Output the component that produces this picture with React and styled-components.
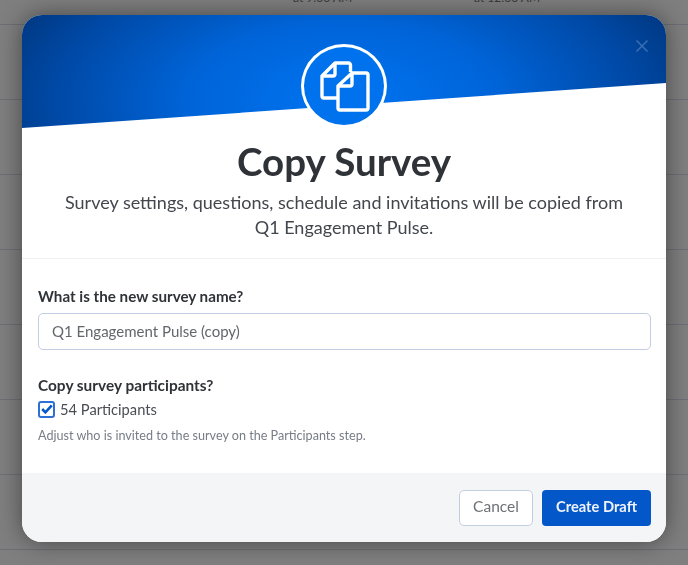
import React from 'react'
import styled, { createGlobalStyle } from 'styled-components'

const GlobalStyle = createGlobalStyle`
  html, body {
    margin: 0;
    height: 100%;
    overflow: hidden;
    background: #7f7f7f;
    font-family: 'Lato', 'Open Sans', sans-serif;
  }
  * {
    box-sizing: border-box;
  }
`

const rows = [
  { first: 'at 9:00 AM', second: 'at 12:00 AM' },
  {}, {}, {}, {}, {}, {}, {},
]

const App = () => {
  return (
    <>
      <GlobalStyle />
      <Table>
        {rows.map((row, i) => (
          <Row key={i}>
            <Cell>{row.first}</Cell>
            <Cell>{row.second}</Cell>
          </Row>
        ))}
      </Table>
      <Overlay>
        <Modal>
          <Hero>
            <Close aria-label="Close">
              <svg width="14" height="14" viewBox="0 0 14 14">
                <path d="M1.5 1.5l11 11M12.5 1.5l-11 11" stroke="currentColor" strokeWidth="1.5" fill="none" />
              </svg>
            </Close>
            <Badge>
              <svg width="52" height="52" viewBox="0 0 52 52" fill="none" stroke="#fff" strokeWidth="3.4" strokeLinejoin="round">
                <path d="M32.5 12V5a2 2 0 0 0-2-2H17L4 16v20a2 2 0 0 0 2 2h13" />
                <path d="M17 3v11a2 2 0 0 1-2 2H4" />
                <path d="M34 13h14a2 2 0 0 1 2 2v33a2 2 0 0 1-2 2H22a2 2 0 0 1-2-2V26z" />
                <path d="M34 13v11a2 2 0 0 1-2 2H20" />
              </svg>
            </Badge>
          </Hero>
          <Intro>
            <Title>Copy Survey</Title>
            <Description>
              Survey settings, questions, schedule and invitations will be copied from
              <br />
              Q1 Engagement Pulse.
            </Description>
          </Intro>
          <Form>
            <Label htmlFor="survey-name">What is the new survey name?</Label>
            <Input id="survey-name" defaultValue="Q1 Engagement Pulse (copy)" />
            <Heading>Copy survey participants?</Heading>
            <Check>
              <CheckBox>
                <svg width="12" height="10" viewBox="0 0 12 10">
                  <path d="M1.2 5l3.2 3.3L10.8 1.4" stroke="#0457c8" strokeWidth="2.6" fill="none" />
                </svg>
              </CheckBox>
              54 Participants
            </Check>
            <Hint>Adjust who is invited to the survey on the Participants step.</Hint>
          </Form>
          <Footer>
            <CancelButton>Cancel</CancelButton>
            <PrimaryButton>Create Draft</PrimaryButton>
          </Footer>
        </Modal>
      </Overlay>
    </>
  )
}

const Table = styled.div`
  margin-top: -50px;
  background: #7f7f7f;
`

const Row = styled.div`
  height: 75px;
  padding: 0 0 19px 293px;
  display: flex;
  align-items: flex-end;
  gap: 122px;
  border-bottom: 1px solid #6e6e74;
`

const Cell = styled.span`
  font-size: 12px;
  line-height: 14px;
  color: #3a3a3a;
`

const Overlay = styled.div`
  position: fixed;
  inset: 0;
  padding-top: 15px;
`

const Modal = styled.div`
  width: 644px;
  height: 527px;
  margin: 0 auto;
  background: #fff;
  border-radius: 20px;
  overflow: hidden;
  display: flex;
  flex-direction: column;
  box-shadow: 0 0 24px rgba(0, 0, 0, 0.45);
`

const Hero = styled.div`
  position: relative;
  height: 113px;
  flex: none;
  padding-top: 29px;
  display: flex;
  justify-content: center;

  &::before {
    content: '';
    position: absolute;
    inset: 0;
    background: radial-gradient(ellipse 345px 170px at 50% 85px, #0074f2 0%, #0064d8 45%, #0048a4 85%, #003070 115%);
    clip-path: polygon(0 0, 100% 0, 100% 68px, 0 113px);
  }
`

const Close = styled.button`
  position: absolute;
  top: 24px;
  right: 17px;
  width: 14px;
  height: 14px;
  padding: 0;
  border: 0;
  display: flex;
  background: none;
  color: rgba(150, 185, 225, 0.38);
`

const Badge = styled.div`
  position: relative;
  width: 86px;
  height: 84px;
  flex: none;
  border: 3px solid #fff;
  border-radius: 50%;
  background: #0072ee;
  display: flex;
  align-items: center;
  justify-content: center;
`

const Intro = styled.div`
  height: 131px;
  flex: none;
  padding-top: 11px;
  text-align: center;
  border-bottom: 1px solid #eff0f2;
`

const Title = styled.h1`
  margin: 0;
  font-size: 38.5px;
  line-height: 44px;
  font-weight: 700;
  color: #2f3338;
`

const Description = styled.p`
  margin: 7px 0 0;
  font-size: 18px;
  line-height: 25px;
  color: #43474d;
`

const Form = styled.div`
  flex: 1;
  padding: 28px 15px 0 16px;
  display: flex;
  flex-direction: column;
  align-items: flex-start;
`

const Label = styled.label`
  font-size: 15.2px;
  line-height: 18px;
  font-weight: 700;
  color: #2f3338;
`

const Heading = styled.div`
  margin-top: 26px;
  font-size: 15.4px;
  line-height: 18px;
  font-weight: 700;
  color: #2f3338;
`

const Input = styled.input`
  width: 100%;
  height: 37px;
  margin-top: 8px;
  padding: 0 13px 2px;
  border: 1.5px solid #c2cde2;
  border-radius: 5px;
  font: inherit;
  font-size: 15px;
  color: #63676d;
  outline: none;
`

const Check = styled.label`
  margin-top: 6px;
  display: flex;
  align-items: center;
  gap: 5px;
  font-size: 14.7px;
  line-height: 18px;
  color: #4a4e54;
`

const CheckBox = styled.span`
  width: 17px;
  height: 17px;
  border: 2px solid #2c70d4;
  border-radius: 3px;
  background: #fff;
  display: flex;
  align-items: center;
  justify-content: center;
`

const Hint = styled.p`
  margin: 10px 0 0;
  font-size: 12.6px;
  line-height: 16px;
  color: #777c86;
`

const Footer = styled.div`
  height: 69px;
  flex: none;
  padding: 17px 15px 0 0;
  display: flex;
  justify-content: flex-end;
  align-items: flex-start;
  gap: 9px;
  background: #f4f5f7;
`

const CancelButton = styled.button`
  width: 74px;
  height: 36px;
  padding: 0 0 4px;
  border: 1.5px solid #c2cde2;
  border-radius: 5px;
  background: #fff;
  font: inherit;
  font-size: 15.5px;
  color: #6d7177;
`

const PrimaryButton = styled.button`
  width: 109px;
  height: 36px;
  padding: 0 0 4px;
  border: 0;
  border-radius: 4px;
  background: #0457c8;
  font: inherit;
  font-size: 14.7px;
  font-weight: 700;
  color: #eef3fb;
`

export default App
